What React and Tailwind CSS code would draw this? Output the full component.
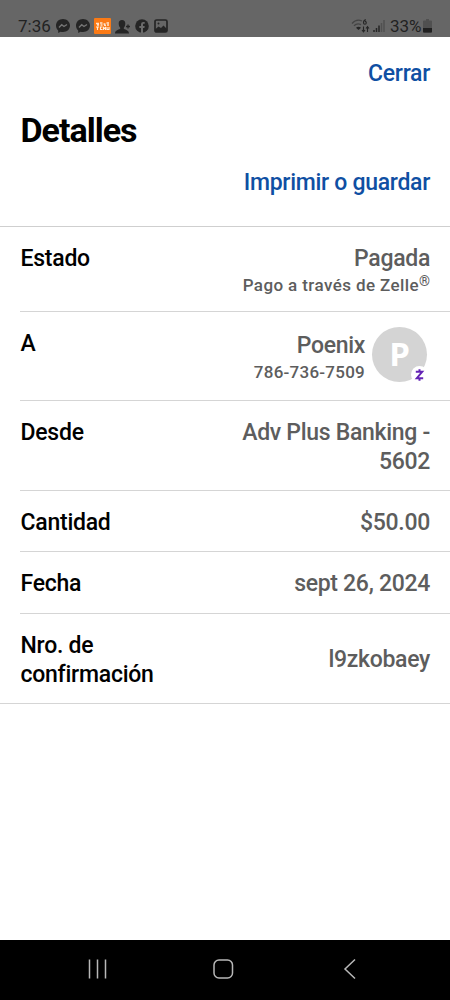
import React from "react";

function Messenger() {
  return (
    <svg className="h-[14px] w-[14px]" viewBox="0 0 14 14">
      <path d="M7 0C3 0 0 2.8 0 6.6c0 2 .8 3.700 2.200 4.900V14l2.300-1.200c.8.200 1.600.3 2.500.3 4 0 7-2.800 7-6.500S11 0 7 0z" fill="#252525" />
      <path d="M3 8.400 5.700 5.700l2.300 1.800 3-2" fill="none" stroke="#747474" strokeWidth="1.400" />
    </svg>
  );
}

function StatusBar() {
  return (
    <header className="relative h-[37px] bg-[#666666] text-[#222]">
      <span className="absolute left-[18px] top-[16px] text-[17px] leading-[20px]">7:36</span>
      <div className="absolute left-[56px] top-[19px]"><Messenger /></div>
      <div className="absolute left-[76px] top-[19px]"><Messenger /></div>
      <svg className="absolute left-[94px] top-[18px]" width="17" height="16" viewBox="0 0 17 16">
        <rect width="17" height="16" rx="1" fill="#fb7a15" />
        <path d="M2 5.500h3M6 5h2.500M9.500 6h2M12.500 5h2.500M3 7h2M6.500 7h2M10 7.300h2M13 7h2" stroke="#ffe3cc" strokeWidth="1.300" />
        <path d="M2 9h3M3.500 9v3M8.500 9H6.500v2.500h2M9.500 12V9.500l1 1 1-1V12M13 9v2.500h2V9" stroke="#ffeedd" strokeWidth="1.100" fill="none" />
      </svg>
      <svg className="absolute left-[115px] top-[20px]" width="16" height="14" viewBox="0 0 16 14">
        <path d="M7 0C4.800 0 3.700 1.500 3.700 3.500c0 2 .7 3.300 1.500 4.200v1.100C3 10 0 10.500 0 13.500h14c0-3-3-3.500-5.200-4.700V7.700c.8-.9 1.500-2.200 1.500-4.200C10.300 1.500 9.200 0 7 0z" fill="#252525" />
        <path d="M13 4.500v4M11 6.500h4" stroke="#252525" strokeWidth="1.300" />
      </svg>
      <svg className="absolute left-[135px] top-[19px]" width="14" height="14" viewBox="0 0 14 14">
        <circle cx="7" cy="7" r="6.800" fill="#252525" />
        <path d="M6 14V9H4.300V7H6V5.500C6 3.800 7 3 8.400 3h1.300v1.800h-.9C8.100 4.800 8 5.200 8 5.800V7h1.700l-.3 2H8v5z" fill="#6b6b6b" />
      </svg>
      <svg className="absolute left-[154px] top-[19px]" width="14" height="14" viewBox="0 0 14 14">
        <rect x="1" y="1" width="12" height="12" rx="1.600" fill="none" stroke="#252525" strokeWidth="1.700" />
        <path d="M1 10.500l3.500-3L7 9 9.500 6.500 13 10v3H1z" fill="#252525" />
        <circle cx="4.500" cy="4.500" r="1" fill="#252525" />
      </svg>
      <svg className="absolute left-[351px] top-[19px]" width="20" height="15" viewBox="0 0 20 15">
        <g fill="none" stroke="#444" strokeWidth="1.300">
          <path d="M1 4.500C4 1 8 .6 11 2" />
          <path d="M3 6.800c2-2 4.500-2.400 7-1.200" />
        </g>
        <path d="M5 8.700c1.500-1.300 3.500-1.300 5 0L7.500 11z" fill="#252525" />
        <path d="M15 .8c-1.800.2-2.500 1.500-2.500 3a1.400 1.400 0 1 0 1.400-1.400M12.500 7.500v5M11 11l1.500 1.800L14 11M16.500 13V8M15 9.500l1.500-1.800L18 9.500" fill="none" stroke="#252525" strokeWidth="1.100" />
      </svg>
      <svg className="absolute left-[373px] top-[20px]" width="12" height="12" viewBox="0 0 12 12">
        <path d="M1 10v2M3.500 8v4M6 5.500V12" stroke="#252525" strokeWidth="1.500" />
        <path d="M8.500 3v9M11 0v12" stroke="#505050" strokeWidth="1.500" />
      </svg>
      <span className="absolute left-[390px] top-[16px] text-[17px] leading-[20px]">33%</span>
      <svg className="absolute left-[423px] top-[19px]" width="9" height="14" viewBox="0 0 9 14">
        <path d="M3 0h3v1.500h2q1 0 1 1V13q0 1-1 1H1q-1 0-1-1V2.500q0-1 1-1h2z" fill="#505050" />
        <path d="M0 9h9v3.500q0 1-1 1H1q-1 0-1-1z" fill="#202020" />
      </svg>
    </header>
  );
}

function Row({ label, height, children, center, last }) {
  return (
    <div className={`${height} flex justify-between border-b border-[#d5d5d5] pr-5 ${last ? "pl-[20px]" : "ml-[20px]"} ${center ? "items-center pt-[2px]" : "items-start pt-[17px]"}`}>
      <div className="w-[160px] pl-[0.5px] tracking-[-0.25px] text-black">{label}</div>
      <div className="text-right tracking-[-0.3px] text-[#5d5d5d]">{children}</div>
    </div>
  );
}

export default function App() {
  return (
    <div className="flex h-[1000px] w-[450px] flex-col overflow-hidden bg-white font-['Roboto',sans-serif]">
      <StatusBar />
      <main className="flex-1 text-[23px] font-medium leading-[29px]">
        <div className="flex h-[190px] flex-col border-b border-[#cfcfcf] px-5 pt-[22px]">
          <button className="self-end tracking-[-0.3px] text-[#0f4fa3]">Cerrar</button>
          <h1 className="mt-[22px] pl-[0.5px] text-[34px] font-bold leading-[40px] tracking-[-1px] text-black">Detalles</h1>
          <button className="mt-[18px] self-end tracking-[-0.3px] text-[#0f4fa3]">Imprimir o guardar</button>
        </div>
        <Row label="Estado" height="h-[85px]">
          <div>Pagada</div>
          <div className="text-[17px] leading-[25px] tracking-[0.4px]">Pago a través de Zelle<span className="relative top-[-5px] text-[14px] leading-none tracking-normal">®</span></div>
        </Row>
        <Row label="A" height="h-[89px]">
          <div className="flex gap-[7px]">
            <div className="pt-[2px]">
              <div>Poenix</div>
              <div className="text-[17px] leading-[24px] tracking-[0.25px]">786-736-7509</div>
            </div>
            <div className="relative -mt-[2px] mr-[3px] flex h-[55px] w-[55px] items-center justify-center rounded-full bg-[#d4d4d4] pb-[2px] font-['Open_Sans',sans-serif] text-[33px] font-bold text-white">
              P
              <span className="absolute bottom-[-1px] right-[-1px] flex h-[17px] w-[17px] items-center justify-center rounded-full bg-white">
                <svg width="11" height="14" viewBox="0 0 11 14"><path d="M1.800 3.800h6.400L2.800 10.200h6.400M5.500 1.300v2.500M5.500 10.200v2.500" fill="none" stroke="#6424b5" strokeWidth="2" /></svg>
              </span>
            </div>
          </div>
        </Row>
        <Row label="Desde" height="h-[90px]">Adv Plus Banking -<br />5602</Row>
        <Row label="Cantidad" height="h-[61px]" center>$50.00</Row>
        <Row label="Fecha" height="h-[62px]" center>sept 26, 2024</Row>
        <Row label={<>Nro. de<br />confirmación</>} height="h-[90px]" center last>l9zkobaey</Row>
      </main>
      <nav className="relative h-[60px] bg-black">
        <svg width="450" height="60" viewBox="0 0 450 60" fill="none" stroke="#b8b8b8" strokeWidth="1.500">
          <path d="M89.500 19.500v19M97.500 19.500v19M105.500 19.500v19M355 19.500l-10 9.500 10 9.500" />
          <rect x="214" y="20" width="18.500" height="18" rx="5" />
        </svg>
      </nav>
    </div>
  );
}
